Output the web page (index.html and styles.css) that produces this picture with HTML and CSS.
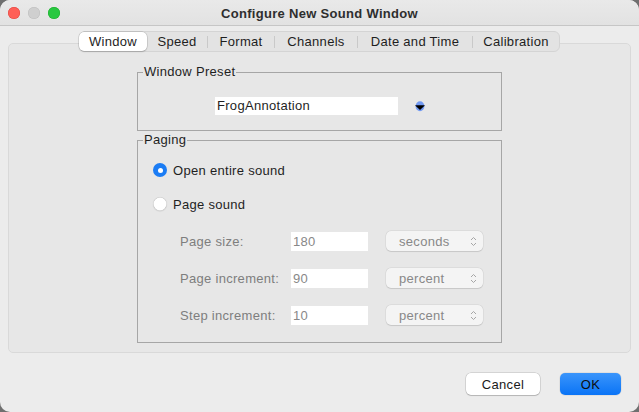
FILE: index.html
```html
<!DOCTYPE html>
<html>
<head>
<meta charset="utf-8">
<link rel="stylesheet" href="styles.css">
</head>
<body>
<div class="window">
  <div class="titlebar">
    <div class="lights">
      <span class="light red"></span>
      <span class="light gray"></span>
      <span class="light green"></span>
    </div>
    <div class="title">Configure New Sound Window</div>
    <div></div>
  </div>
  <div class="content">
    <div class="tabs">
      <div class="tab active t-window">Window</div>
      <div class="tab t-speed">Speed</div>
      <span class="sep"></span>
      <div class="tab t-format">Format</div>
      <span class="sep"></span>
      <div class="tab t-channels">Channels</div>
      <span class="sep"></span>
      <div class="tab t-date">Date and Time</div>
      <span class="sep"></span>
      <div class="tab t-cal">Calibration</div>
    </div>
    <div class="panel">
      <fieldset class="group preset">
        <legend>Window Preset</legend>
        <div class="preset-row">
          <div class="combo">FrogAnnotation</div>
          <svg class="preset-arrow" width="12" height="11" viewBox="0 0 12 11">
            <ellipse cx="6" cy="5.2" rx="4.4" ry="5" fill="#7199f2"/>
            <polygon points="1,4.2 11,4.2 6,9" fill="#000"/>
          </svg>
        </div>
      </fieldset>
      <fieldset class="group paging">
        <legend>Paging</legend>
        <label class="radio-row"><span class="radio checked"></span>Open entire sound</label>
        <label class="radio-row second"><span class="radio"></span>Page sound</label>
        <div class="params">
          <span class="plabel">Page size:</span>
          <span class="field">180</span>
          <span class="select">seconds<svg class="chev" width="7" height="11" viewBox="0 0 7 11"><path d="M1 4 L3.5 1.5 L6 4 M1 7 L3.5 9.5 L6 7" fill="none" stroke="#a6a6a6" stroke-width="1"/></svg></span>
          <span class="plabel">Page increment:</span>
          <span class="field">90</span>
          <span class="select">percent<svg class="chev" width="7" height="11" viewBox="0 0 7 11"><path d="M1 4 L3.5 1.5 L6 4 M1 7 L3.5 9.5 L6 7" fill="none" stroke="#a6a6a6" stroke-width="1"/></svg></span>
          <span class="plabel">Step increment:</span>
          <span class="field">10</span>
          <span class="select">percent<svg class="chev" width="7" height="11" viewBox="0 0 7 11"><path d="M1 4 L3.5 1.5 L6 4 M1 7 L3.5 9.5 L6 7" fill="none" stroke="#a6a6a6" stroke-width="1"/></svg></span>
        </div>
      </fieldset>
    </div>
    <div class="buttons">
      <button class="btn cancel">Cancel</button>
      <button class="btn ok">OK</button>
    </div>
  </div>
</div>
</body>
</html>
```

FILE: styles.css
```css
* { box-sizing: border-box; }
html, body { margin: 0; padding: 0; }
body {
  width: 639px;
  height: 412px;
  background: #6f6f6f;
  font-family: "Liberation Sans", Arial, sans-serif;
  font-size: 13px;
  letter-spacing: 0.3px;
  color: #1f1f1f;
  overflow: hidden;
}
.window {
  width: 639px;
  height: 412px;
  background: #ececec;
  border-radius: 10px;
  overflow: hidden;
  display: flex;
  flex-direction: column;
}
.titlebar {
  height: 26px;
  flex: none;
  background: linear-gradient(#e9e9e9, #e2e2e2);
  border-bottom: 1px solid #c6c6c6;
  display: grid;
  grid-template-columns: 1fr auto 1fr;
  align-items: center;
}
.lights {
  display: flex;
  gap: 8px;
  padding-left: 8px;
  padding-top: 1px;
}
.light {
  width: 12px;
  height: 12px;
  border-radius: 50%;
  display: block;
}
.light.red { background: #fe5f57; box-shadow: inset 0 0 0 0.5px #e0443e; }
.light.gray { background: #cfcfcf; box-shadow: inset 0 0 0 0.5px #bdbdbd; }
.light.green { background: #28c840; box-shadow: inset 0 0 0 0.5px #1aab29; }
.title {
  font-weight: bold;
  font-size: 13px;
  color: #2e2e2e;
  padding-top: 1px;
}
.content {
  flex: 1;
  display: flex;
  flex-direction: column;
}
.tabs {
  position: relative;
  z-index: 1;
  margin: 5px auto 0;
  width: 481px;
  height: 21px;
  display: flex;
  align-items: center;
  background: #e3e3e3;
  border: 1px solid #d4d4d4;
  border-radius: 6px;
}
.tab {
  height: 19px;
  display: flex;
  align-items: center;
  justify-content: center;
  color: #1e1e1e;
  flex: none;
}
.tab.active {
  background: #fff;
  border-radius: 5px;
  box-shadow: 0 0 0 0.5px rgba(0,0,0,0.18), 0 1px 1.5px rgba(0,0,0,0.15);
  margin-left: -1px;
}
.sep {
  width: 1px;
  height: 12px;
  background: #c9c9c9;
  flex: none;
}
.t-window { width: 68px; }
.t-speed { width: 60px; }
.t-format { width: 66px; }
.t-channels { width: 82px; }
.t-date { width: 114px; }
.t-cal { width: 86px; }
.panel {
  margin: -9px 8px 0;
  height: 310px;
  flex: none;
  background: #e7e7e7;
  border: 1px solid #d9d9d9;
  border-radius: 5px;
  padding-top: 20px;
}
.group {
  width: 365px;
  margin: 0 auto;
  border: 1px solid #a6a6a6;
  padding: 0 15px;
  min-width: 0;
}
.group legend {
  padding: 0 1px;
  margin-left: -10px;
  line-height: 16px;
  color: #1f1f1f;
}
.preset { padding-top: 17px; padding-bottom: 15px; }
.preset-row {
  display: flex;
  align-items: center;
  justify-content: center;
  gap: 16px;
  padding-left: 2px;
}
.combo {
  width: 183px;
  height: 18px;
  background: #fff;
  line-height: 18px;
  padding-left: 2px;
  color: #1f1f1f;
}
.preset-arrow { display: block; margin-top: 1px; }
.paging { margin-top: 1px; padding-top: 12px; padding-bottom: 17px; }
.radio-row {
  display: flex;
  align-items: center;
  gap: 6px;
  height: 20px;
  color: #1f1f1f;
}
.radio-row.second { margin-top: 14px; }
.radio {
  width: 14px;
  height: 14px;
  border-radius: 50%;
  background: #fff;
  box-shadow: inset 0 0 0 0.5px #c2c2c2, 0 0.5px 1px rgba(0,0,0,0.12);
  display: flex;
  align-items: center;
  justify-content: center;
}
.radio.checked {
  background: #1b7cf4;
  box-shadow: none;
}
.radio.checked::after {
  content: "";
  width: 5px;
  height: 5px;
  border-radius: 50%;
  background: #fff;
}
.params {
  margin-top: 17px;
  margin-left: 27px;
  display: grid;
  grid-template-columns: 93px 77px 97px;
  column-gap: 18px;
  row-gap: 17px;
  align-items: center;
}
.plabel { color: #7e7e7e; white-space: nowrap; }
.field {
  height: 19px;
  background: #fff;
  line-height: 19px;
  padding-left: 2px;
  color: #888;
}
.select {
  height: 20px;
  background: #f4f4f4;
  border-radius: 5px;
  box-shadow: 0 0 0 0.5px rgba(0,0,0,0.08), 0 0.5px 1px rgba(0,0,0,0.1);
  display: flex;
  align-items: center;
  justify-content: space-between;
  padding: 0 6px 0 13px;
  color: #888;
}
.chev { display: block; }
.buttons {
  margin-top: 20px;
  display: flex;
  justify-content: flex-end;
  gap: 20px;
  padding-right: 18px;
}
.btn {
  height: 22px;
  font-family: "Liberation Sans", Arial, sans-serif;
  font-size: 13px;
  letter-spacing: 0.3px;
  border: none;
  border-radius: 5px;
  padding: 0;
  color: #1a1a1a;
}
.cancel {
  width: 74px;
  background: #fff;
  box-shadow: 0 0 0 0.5px rgba(0,0,0,0.2), 0 1px 1px rgba(0,0,0,0.15);
}
.ok {
  width: 61px;
  background: linear-gradient(#3a95fb, #0a74f6);
  box-shadow: 0 0 0 0.5px rgba(0,0,0,0.1);
  color: #0d0d0d;
}
```
